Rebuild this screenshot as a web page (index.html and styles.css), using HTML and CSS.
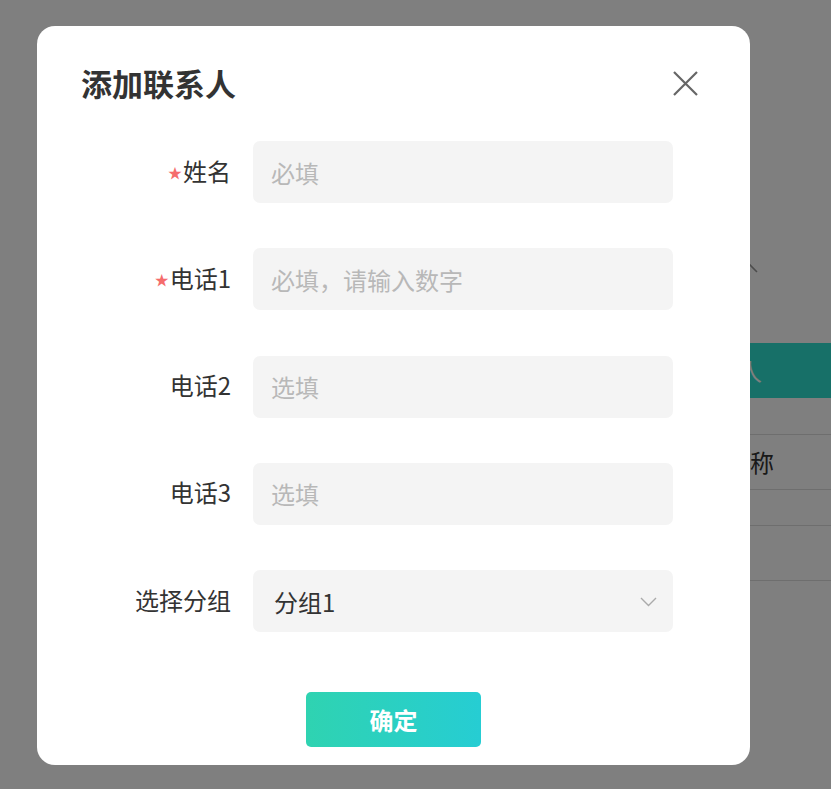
FILE: index.html
```html
<!DOCTYPE html>
<html lang="zh-CN">
<head>
<meta charset="utf-8">
<title>添加联系人</title>
<link rel="stylesheet" href="styles.css">
</head>
<body>
<div class="page">
  <div class="filter">
    <span>分组全部</span>
    <svg class="up" width="16" height="10" viewBox="0 0 16 10"><path d="M1 9 L8 2 L15 9" fill="none" stroke="#999" stroke-width="1.6"/></svg>
  </div>
  <div class="add-btn">添加联系人</div>
  <div class="table">
    <div class="trow head"><span>名称</span></div>
    <div class="trow short"></div>
    <div class="trow"></div>
  </div>
</div>
<div class="mask"></div>
<div class="dialog">
  <div class="dialog-head">
    <h2 class="dialog-title">添加联系人</h2>
    <svg class="close" width="25" height="25" viewBox="0 0 25 25"><path d="M1 1 L24 24 M24 1 L1 24" stroke="#666" stroke-width="2.2" fill="none"/></svg>
  </div>
  <form class="form">
    <label class="lbl"><span class="req">★</span>姓名</label>
    <div class="field"><span class="ph">必填</span></div>
    <label class="lbl"><span class="req">★</span>电话1</label>
    <div class="field"><span class="ph">必填，请输入数字</span></div>
    <label class="lbl">电话2</label>
    <div class="field"><span class="ph">选填</span></div>
    <label class="lbl">电话3</label>
    <div class="field"><span class="ph">选填</span></div>
    <label class="lbl">选择分组</label>
    <div class="field select"><span class="val">分组1</span>
      <svg class="chev" width="17" height="10" viewBox="0 0 17 10"><path d="M1 1 L8.5 8.5 L16 1" fill="none" stroke="#aaa" stroke-width="1.4"/></svg>
    </div>
  </form>
  <div class="actions"><button class="ok" type="button">确定</button></div>
</div>
</body>
</html>
```
FILE: styles.css
```css
html, body {
  margin: 0;
  padding: 0;
}
body {
  width: 831px;
  height: 789px;
  overflow: hidden;
  background: #ffffff;
  font-family: "Noto Sans CJK SC", "Noto Sans", sans-serif;
  color: #333;
  position: relative;
}
.page {
  padding-top: 256px;
  padding-left: 560px;
  display: flex;
  flex-direction: column;
}
.filter {
  display: flex;
  align-items: center;
  justify-content: flex-end;
  gap: 6px;
  width: 198px;
  height: 24px;
  font-size: 22px;
  color: #555;
}
.add-btn {
  margin-top: 63px;
  height: 55px;
  width: 271px;
  background: #2ee0d0;
  color: #fff;
  font-size: 24px;
  line-height: 55px;
  padding-left: 82px;
  box-sizing: border-box;
}
.table {
  margin-top: 36px;
  width: 271px;
}
.trow {
  height: 54px;
  border-top: 1px solid #dcdcdc;
}
.trow:last-child {
  border-bottom: 1px solid #dcdcdc;
}
.trow.short {
  height: 35px;
}
.trow.head span {
  display: block;
  padding-left: 166px;
  font-size: 24px;
  line-height: 54px;
  color: #333;
}
.mask {
  position: absolute;
  inset: 0;
  background: rgba(0, 0, 0, 0.5);
}
.dialog {
  position: absolute;
  left: 37px;
  top: 26px;
  width: 713px;
  height: 739px;
  background: #fff;
  border-radius: 18px;
  box-sizing: border-box;
  padding-top: 37px;
}
.dialog-head {
  display: flex;
  align-items: center;
  justify-content: space-between;
  padding: 0 52px 0 44px;
  height: 40px;
}
.dialog-title {
  margin: 0;
  font-size: 31px;
  line-height: 40px;
  font-weight: 700;
  color: #333;
}
.close {
  display: block;
}
.form {
  margin-top: 38px;
  display: grid;
  grid-template-columns: 194px 420px;
  grid-auto-rows: 62px;
  column-gap: 22px;
  row-gap: 45.25px;
}
.lbl {
  display: flex;
  align-items: center;
  justify-content: flex-end;
  font-size: 24px;
  color: #333;
  padding-bottom: 4px;
}
.req {
  color: #f56c6c;
  font-size: 14px;
  margin-right: 1px;
  padding-top: 3px;
}
.field {
  background: #f4f4f4;
  border-radius: 7px;
  display: flex;
  align-items: center;
  padding-left: 18px;
  padding-right: 16px;
  font-size: 24px;
}
.ph {
  color: #b8b8b8;
}
.select {
  justify-content: space-between;
  padding-left: 21px;
}
.val {
  color: #333;
}
.chev {
  display: block;
  margin-top: 2px;
}
.actions {
  display: flex;
  justify-content: center;
  margin-top: 60px;
}
.ok {
  width: 175px;
  height: 55px;
  border: 0;
  border-radius: 5px;
  background: linear-gradient(90deg, #2fd3b1, #26cdd3);
  color: #fff;
  font-family: "Noto Sans CJK SC", sans-serif;
  font-size: 24px;
  font-weight: 700;
}
```
